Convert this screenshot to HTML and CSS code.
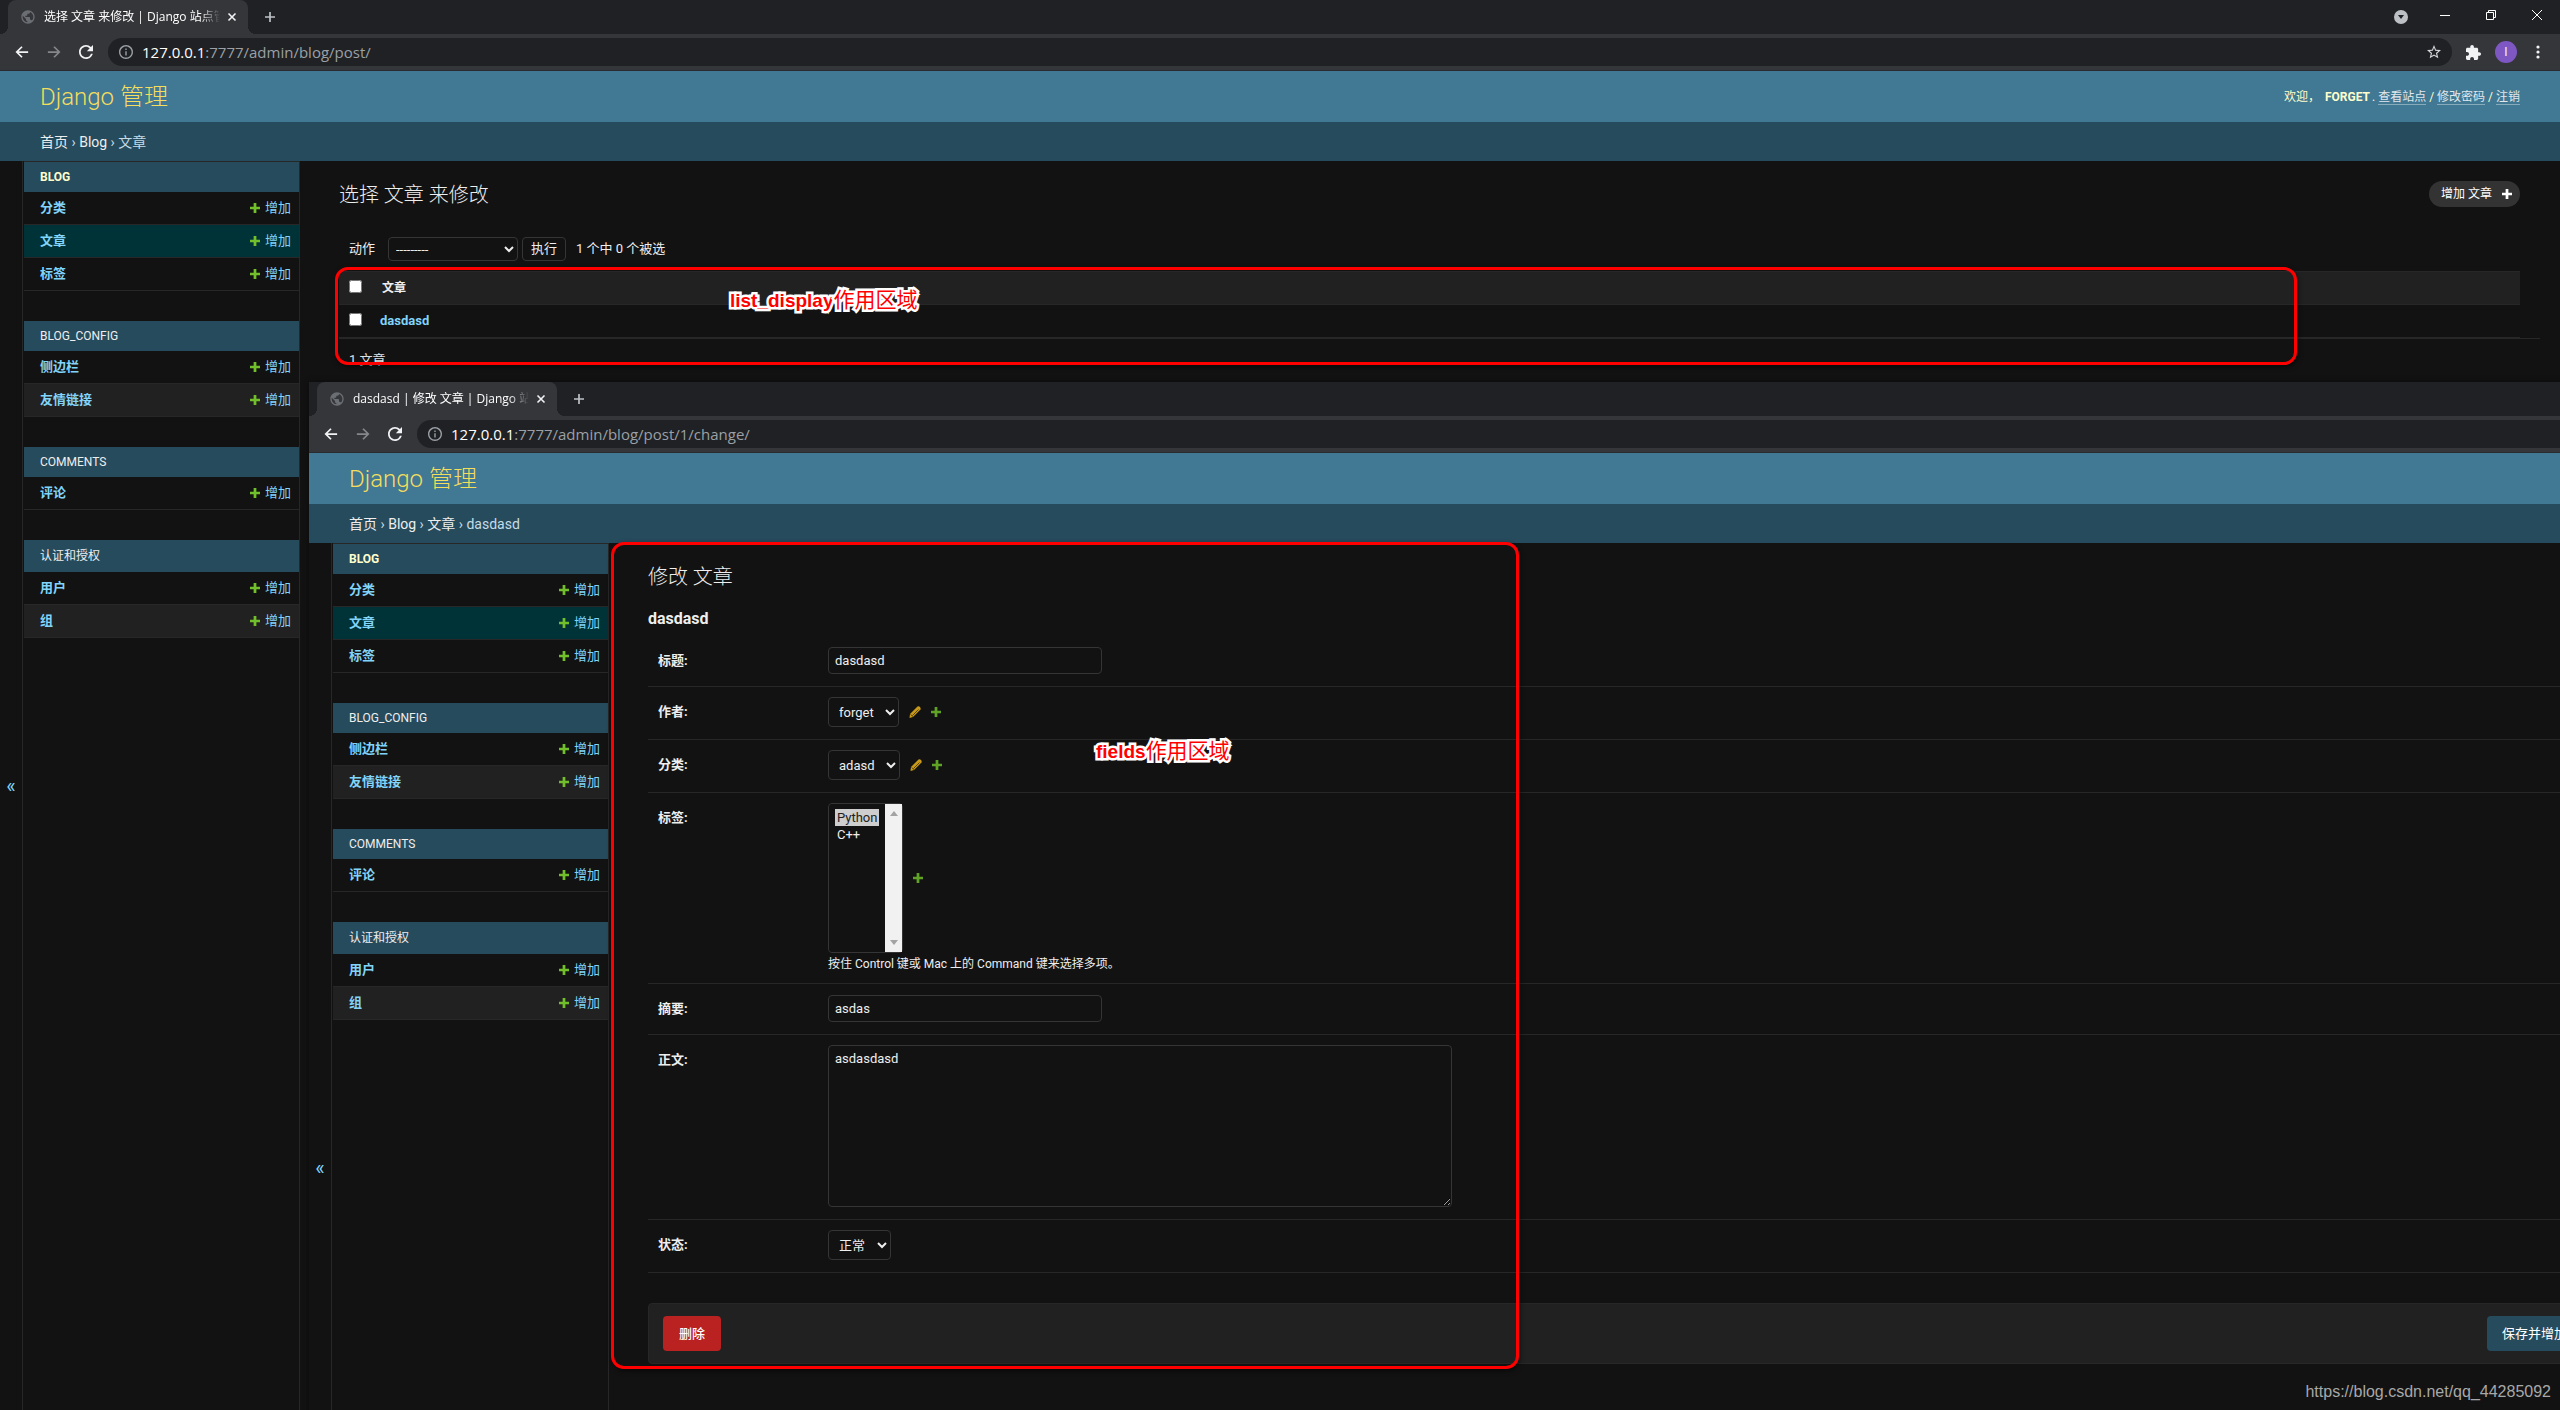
FILE: index.html
```html
<!DOCTYPE html>
<html lang="zh-CN">
<head>
<meta charset="utf-8">
<title>选择 文章 来修改 | Django 站点管理</title>
<link rel="stylesheet" href="styles.css">
</head>
<body>
<svg class="defs" width="0" height="0" aria-hidden="true">
  <symbol id="globe" viewBox="0 0 24 24"><path d="M12 2C6.48 2 2 6.48 2 12s4.48 10 10 10 10-4.480 10-10S17.520 2 12 2zm-1 17.930c-3.950-.490-7-3.850-7-7.930 0-.620.080-1.210.210-1.790L9 15v1c0 1.100.900 2 2 2v1.930zm6.900-2.540c-.260-.810-1-1.390-1.900-1.390h-1v-3c0-.550-.450-1-1-1H8v-2h2c.550 0 1-.450 1-1V7h2c1.100 0 2-.900 2-2v-.410c2.930 1.190 5 4.060 5 7.410 0 2.080-.800 3.970-2.100 5.390z"/></symbol>
  <symbol id="close" viewBox="0 0 10 10"><path d="M1.500 1.500l7 7M8.500 1.500l-7 7" fill="none" stroke="currentColor" stroke-width="1.600"/></symbol>
  <symbol id="newtab" viewBox="0 0 12 12"><path d="M6 1v10M1 6h10" fill="none" stroke="currentColor" stroke-width="1.700"/></symbol>
  <symbol id="back" viewBox="0 0 16 16"><path d="M15 8H2.500M8 2L2 8l6 6" fill="none" stroke="currentColor" stroke-width="2"/></symbol>
  <symbol id="forward" viewBox="0 0 16 16"><path d="M1 8h12.500M8 2l6 6-6 6" fill="none" stroke="currentColor" stroke-width="2"/></symbol>
  <symbol id="reload" viewBox="4 4 16 16"><path d="M17.650 6.350A7.958 7.958 0 0 0 12 4c-4.420 0-7.990 3.580-7.990 8s3.570 8 7.990 8c3.730 0 6.840-2.550 7.730-6h-2.080A5.990 5.990 0 0 1 12 18c-3.310 0-6-2.690-6-6s2.690-6 6-6c1.660 0 3.140.690 4.220 1.780L13 11h7V4l-2.350 2.350z"/></symbol>
  <symbol id="info" viewBox="2 2 20 20"><path d="M11 7h2v2h-2zm0 4h2v6h-2zm1-9C6.480 2 2 6.480 2 12s4.480 10 10 10 10-4.480 10-10S17.520 2 12 2zm0 18c-4.410 0-8-3.590-8-8s3.590-8 8-8 8 3.590 8 8-3.590 8-8 8z"/></symbol>
  <symbol id="star" viewBox="2 2 20 20"><path d="M22 9.240l-7.190-.620L12 2 9.190 8.630 2 9.240l5.460 4.730L5.820 21 12 17.270 18.180 21l-1.630-7.030L22 9.240zM12 15.400l-3.760 2.270 1-4.280-3.320-2.880 4.380-.380L12 6.100l1.710 4.040 4.380.380-3.320 2.880 1 4.280L12 15.400z"/></symbol>
  <symbol id="puzzle" viewBox="2 1 21 21"><path d="M20.500 11H19V7c0-1.100-.900-2-2-2h-4V3.500C13 2.120 11.880 1 10.500 1S8 2.120 8 3.500V5H4c-1.100 0-1.990.900-1.990 2v3.800H3.500c1.490 0 2.700 1.210 2.700 2.700s-1.210 2.700-2.700 2.700H2V20c0 1.100.900 2 2 2h3.800v-1.500c0-1.490 1.210-2.700 2.700-2.700s2.700 1.210 2.700 2.700V22H17c1.100 0 2-.900 2-2v-4h1.500c1.380 0 2.500-1.120 2.500-2.500S21.880 11 20.500 11z"/></symbol>
  <symbol id="plus" viewBox="0 0 11 11"><path d="M4 0h3v4h4v3H7v4H4V7H0V4h4z"/></symbol>
  <symbol id="pencil" viewBox="0 0 12 12"><path d="M8.500.500Q10 0 11 1t.500 2.500L4 11 .500 12 1 8z" fill="#c99a17"/><path d="M3.500 9.500l6-6M1.500 8.500l2.500 2" fill="none" stroke="#5c4608"/></symbol>
</svg>

<div class="desktop">
  <section class="window">
    <div class="tabstrip">
      <div class="tab">
        <svg class="favicon"><use href="#globe"/></svg>
        <span class="tab-title">选择 文章 来修改 | Django 站点管理</span>
        <button class="icon-btn" aria-label="关闭标签页"><svg class="i10"><use href="#close"/></svg></button>
      </div>
      <button class="icon-btn new-tab" aria-label="新标签页"><svg class="i12"><use href="#newtab"/></svg></button>
      <div class="caption-buttons">
        <svg class="tab-search" width="14" height="14" viewBox="0 0 14 14"><circle cx="7" cy="7" r="7" fill="#bdc1c6"/><path d="M4 5h6l-3 4z" fill="#202124"/></svg>
        <svg width="12" height="12" viewBox="0 0 12 12"><path d="M1 6.500h10" stroke="#fff"/></svg>
        <svg width="12" height="12" viewBox="0 0 12 12"><path d="M1.500 3.500h7v7h-7zM3.500 3.500v-2h7v7h-2" fill="none" stroke="#fff"/></svg>
        <svg width="12" height="12" viewBox="0 0 12 12"><path d="M1 1l10 10M11 1L1 11" stroke="#fff"/></svg>
      </div>
    </div>
    <div class="toolbar">
      <button class="icon-btn" aria-label="后退"><svg class="i14"><use href="#back"/></svg></button>
      <button class="icon-btn dim" aria-label="前进"><svg class="i14"><use href="#forward"/></svg></button>
      <button class="icon-btn" aria-label="重新加载"><svg class="i14"><use href="#reload"/></svg></button>
      <div class="omnibox">
        <svg class="i14"><use href="#info"/></svg>
        <span class="url"><b>127.0.0.1</b>:7777/admin/blog/post/</span>
        <svg class="i14 star"><use href="#star"/></svg>
      </div>
      <div class="toolbar-end">
        <svg class="i15"><use href="#puzzle"/></svg>
        <span class="avatar">I</span>
        <svg width="4" height="14" viewBox="0 0 4 14"><circle cx="2" cy="2" r="1.600"/><circle cx="2" cy="7" r="1.600"/><circle cx="2" cy="12" r="1.600"/></svg>
      </div>
    </div>
    <header class="site-header">
      <a class="brand" href="#">Django 管理</a>
      <div class="user-tools">欢迎， <strong>FORGET</strong>. <a href="#">查看站点</a> / <a href="#">修改密码</a> / <a href="#">注销</a></div>
    </header>
    <nav class="breadcrumbs"><a href="#">首页</a> › <a href="#">Blog</a> › 文章</nav>
    <div class="main">
      <button class="toggle" aria-label="切换导航">«</button>
      <nav class="sidebar">
        <section class="app">
          <h2 class="app-name current">BLOG</h2>
          <div class="model"><a class="model-name" href="#">分类</a><a class="add" href="#"><svg class="i10"><use href="#plus"/></svg>增加</a></div>
          <div class="model selected"><a class="model-name" href="#">文章</a><a class="add" href="#"><svg class="i10"><use href="#plus"/></svg>增加</a></div>
          <div class="model"><a class="model-name" href="#">标签</a><a class="add" href="#"><svg class="i10"><use href="#plus"/></svg>增加</a></div>
        </section>
        <section class="app">
          <h2 class="app-name">BLOG_CONFIG</h2>
          <div class="model"><a class="model-name" href="#">侧边栏</a><a class="add" href="#"><svg class="i10"><use href="#plus"/></svg>增加</a></div>
          <div class="model even"><a class="model-name" href="#">友情链接</a><a class="add" href="#"><svg class="i10"><use href="#plus"/></svg>增加</a></div>
        </section>
        <section class="app">
          <h2 class="app-name">COMMENTS</h2>
          <div class="model"><a class="model-name" href="#">评论</a><a class="add" href="#"><svg class="i10"><use href="#plus"/></svg>增加</a></div>
        </section>
        <section class="app">
          <h2 class="app-name tall">认证和授权</h2>
          <div class="model"><a class="model-name" href="#">用户</a><a class="add" href="#"><svg class="i10"><use href="#plus"/></svg>增加</a></div>
          <div class="model even"><a class="model-name" href="#">组</a><a class="add" href="#"><svg class="i10"><use href="#plus"/></svg>增加</a></div>
        </section>
      </nav>
      <main class="content">
        <div class="title-row">
          <h1>选择 文章 来修改</h1>
          <a class="add-object" href="#">增加 文章 <svg class="i10"><use href="#plus"/></svg></a>
        </div>
        <div class="actions">
          <label for="action">动作</label>
          <select id="action" class="action-select"><option>---------</option></select>
          <button class="go">执行</button>
          <span class="counter">1 个中 0 个被选</span>
        </div>
        <table class="results">
          <thead><tr><th class="check"><input type="checkbox" aria-label="全选"></th><th>文章</th></tr></thead>
          <tbody><tr><td class="check"><input type="checkbox" aria-label="选择 dasdasd"></td><td><a href="#">dasdasd</a></td></tr></tbody>
        </table>
        <p class="paginator">1 文章</p>
      </main>
    </div>
  </section>

  <section class="window front">
    <div class="tabstrip">
      <div class="tab">
        <svg class="favicon"><use href="#globe"/></svg>
        <span class="tab-title">dasdasd | 修改 文章 | Django 站点管理</span>
        <button class="icon-btn" aria-label="关闭标签页"><svg class="i10"><use href="#close"/></svg></button>
      </div>
      <button class="icon-btn new-tab" aria-label="新标签页"><svg class="i12"><use href="#newtab"/></svg></button>
    </div>
    <div class="toolbar">
      <button class="icon-btn" aria-label="后退"><svg class="i14"><use href="#back"/></svg></button>
      <button class="icon-btn dim" aria-label="前进"><svg class="i14"><use href="#forward"/></svg></button>
      <button class="icon-btn" aria-label="重新加载"><svg class="i14"><use href="#reload"/></svg></button>
      <div class="omnibox">
        <svg class="i14"><use href="#info"/></svg>
        <span class="url"><b>127.0.0.1</b>:7777/admin/blog/post/1/change/</span>
      </div>
    </div>
    <header class="site-header"><a class="brand" href="#">Django 管理</a></header>
    <nav class="breadcrumbs"><a href="#">首页</a> › <a href="#">Blog</a> › <a href="#">文章</a> › dasdasd</nav>
    <div class="main">
      <button class="toggle" aria-label="切换导航">«</button>
      <nav class="sidebar">
        <section class="app">
          <h2 class="app-name current">BLOG</h2>
          <div class="model"><a class="model-name" href="#">分类</a><a class="add" href="#"><svg class="i10"><use href="#plus"/></svg>增加</a></div>
          <div class="model selected"><a class="model-name" href="#">文章</a><a class="add" href="#"><svg class="i10"><use href="#plus"/></svg>增加</a></div>
          <div class="model"><a class="model-name" href="#">标签</a><a class="add" href="#"><svg class="i10"><use href="#plus"/></svg>增加</a></div>
        </section>
        <section class="app">
          <h2 class="app-name">BLOG_CONFIG</h2>
          <div class="model"><a class="model-name" href="#">侧边栏</a><a class="add" href="#"><svg class="i10"><use href="#plus"/></svg>增加</a></div>
          <div class="model even"><a class="model-name" href="#">友情链接</a><a class="add" href="#"><svg class="i10"><use href="#plus"/></svg>增加</a></div>
        </section>
        <section class="app">
          <h2 class="app-name">COMMENTS</h2>
          <div class="model"><a class="model-name" href="#">评论</a><a class="add" href="#"><svg class="i10"><use href="#plus"/></svg>增加</a></div>
        </section>
        <section class="app">
          <h2 class="app-name tall">认证和授权</h2>
          <div class="model"><a class="model-name" href="#">用户</a><a class="add" href="#"><svg class="i10"><use href="#plus"/></svg>增加</a></div>
          <div class="model even"><a class="model-name" href="#">组</a><a class="add" href="#"><svg class="i10"><use href="#plus"/></svg>增加</a></div>
        </section>
      </nav>
      <main class="content">
        <div class="title-row"><h1>修改 文章</h1></div>
        <h2 class="object-name">dasdasd</h2>
        <form>
          <div class="row"><label for="title">标题:</label><div class="field"><input class="text" id="title" type="text" value="dasdasd"></div></div>
          <div class="row"><label for="owner">作者:</label><div class="field"><select id="owner"><option>forget</option></select><a class="related" href="#" aria-label="修改"><svg class="i12"><use href="#pencil"/></svg></a><a class="related" href="#" aria-label="增加"><svg class="i10"><use href="#plus"/></svg></a></div></div>
          <div class="row"><label for="category">分类:</label><div class="field"><select id="category"><option>adasd</option></select><a class="related" href="#" aria-label="修改"><svg class="i12"><use href="#pencil"/></svg></a><a class="related" href="#" aria-label="增加"><svg class="i10"><use href="#plus"/></svg></a></div></div>
          <div class="row"><label for="tags">标签:</label><div>
            <div class="field">
              <div class="listbox">
                <select id="tags" multiple><option selected>Python</option><option>C++</option></select>
                <div class="scroll"><svg width="8" height="5" viewBox="0 0 8 5"><path d="M4 0l4 5H0z"/></svg><svg width="8" height="5" viewBox="0 0 8 5"><path d="M4 5l4-5H0z"/></svg></div>
              </div>
              <a class="related" href="#" aria-label="增加"><svg class="i10"><use href="#plus"/></svg></a>
            </div>
            <p class="help">按住 Control 键或 Mac 上的 Command 键来选择多项。</p>
          </div></div>
          <div class="row"><label for="desc">摘要:</label><div class="field"><input class="text" id="desc" type="text" value="asdas"></div></div>
          <div class="row"><label for="body">正文:</label><div class="field"><textarea id="body">asdasdasd</textarea></div></div>
          <div class="row"><label for="status">状态:</label><div class="field"><select id="status"><option>正常</option></select></div></div>
          <div class="submit-row">
            <button class="btn delete" type="button">删除</button>
            <button class="btn" type="button">保存并增加另一个</button>
            <button class="btn" type="button">保存并继续编辑</button>
            <button class="btn" type="button">保存</button>
          </div>
        </form>
      </main>
    </div>
  </section>

  <div class="mark mark-list"></div>
  <div class="mark mark-fields"></div>
  <div class="note note-list">list_display<span>作用区域</span></div>
  <div class="note note-fields">fields<span>作用区域</span></div>
  <div class="watermark">https://blog.csdn.net/qq_44285092</div>
</div>
</body>
</html>
```
FILE: styles.css
```css
:root {
  --bg: #121212;
  --panel: #212121;
  --hairline: #272727;
  --border: #353535;
  --text: #eee;
  --link: #81d4fa;
  --primary: #417893;
  --secondary: #264b5d;
}

* { box-sizing: border-box; }

body {
  margin: 0;
  background: var(--bg);
  color: var(--text);
  font: 13px/18px Roboto, "Noto Sans CJK SC", sans-serif;
}

a { color: inherit; text-decoration: none; }
h1, h2, p { margin: 0; }
svg { display: block; flex: none; fill: currentColor; }
button, input, select, textarea { font: inherit; color: inherit; }
.defs { position: absolute; }

.i10 { width: 10px; height: 10px; }
.i12 { width: 12px; height: 12px; }
.i14 { width: 14px; height: 14px; }
.i15 { width: 15px; height: 15px; }

.desktop { position: relative; height: 100vh; overflow: hidden; }

.window {
  display: flex;
  flex-direction: column;
  width: 100%;
  height: 100%;
  background: var(--bg);
}
.front {
  position: absolute;
  left: 309px;
  top: 382px;
  box-shadow: 0 0 6px #0006;
}

/* Browser frame */
.tabstrip {
  display: flex;
  flex: none;
  align-items: center;
  height: 34px;
  padding-left: 8px;
  background: #202124;
  color: #e8eaed;
}
.tab {
  position: relative;
  display: flex;
  align-items: center;
  width: 240px;
  height: 34px;
  padding: 0 6px 0 12px;
  border-radius: 8px 8px 0 0;
  background: #35363a;
  font: 12px/16px "Open Sans", "Noto Sans CJK SC", sans-serif;
}
.tab::before, .tab::after {
  content: "";
  position: absolute;
  bottom: 0;
  width: 8px;
  height: 8px;
}
.tab::before { left: -8px; background: radial-gradient(circle at 0 0, #0000 8px, #35363a 8px); }
.tab::after { right: -8px; background: radial-gradient(circle at 100% 0, #0000 8px, #35363a 8px); }
.favicon { width: 16px; height: 16px; color: #6b6e73; }
.tab-title {
  flex: 1;
  margin: 0 2px 0 8px;
  overflow: hidden;
  white-space: nowrap;
  color: #fff;
  mask-image: linear-gradient(to left, #0000, #000 20px);
}
.icon-btn {
  display: grid;
  place-items: center;
  width: 20px;
  height: 20px;
  padding: 0;
  border: 0;
  background: none;
  color: #f1f3f4;
}
.dim { color: #85878a; }
.new-tab { margin-left: 12px; color: #bdc1c6; }
.caption-buttons {
  display: flex;
  align-items: center;
  gap: 34px;
  margin-left: auto;
  padding: 0 17px 4px 0;
}
.tab-search { margin: 4px -3px 0 0; }
.toolbar {
  display: flex;
  flex: none;
  align-items: center;
  gap: 12px;
  height: 37px;
  padding: 0 20px 0 12px;
  border-bottom: 1px solid #2a2b2e;
  background: #35363a;
}
.omnibox {
  display: flex;
  flex: 1;
  align-items: center;
  gap: 9px;
  height: 28px;
  padding: 0 11px;
  border-radius: 14px;
  background: #202124;
  color: #9aa0a6;
  font: 15px/20px "Open Sans", sans-serif;
}
.url b { font-weight: 400; color: #fff; }
.star { margin-left: auto; color: #d5d7da; }
.toolbar-end { display: flex; align-items: center; gap: 14px; padding-left: 2px; color: #f1f3f4; }
.toolbar-end svg:last-child { margin-left: 5px; }
.avatar {
  width: 22px;
  height: 22px;
  border-radius: 50%;
  background: #7e57c2;
  font-size: 12px;
  line-height: 22px;
  text-align: center;
}

/* Admin header */
.site-header {
  display: flex;
  flex: none;
  align-items: center;
  justify-content: space-between;
  height: 51px;
  padding: 0 40px;
  background: var(--primary);
  color: #ffc;
}
.brand { font-size: 24px; font-weight: 300; line-height: 28px; color: #f5dd5d; }
.user-tools { font-size: 12px; }
.user-tools a { border-bottom: 1px solid #ffffff60; color: #e0e8ec; }
.user-tools strong { margin: 0 2px; }
.breadcrumbs {
  flex: none;
  height: 39px;
  padding: 0 40px;
  background: var(--secondary);
  color: #c4dce8;
  font-size: 14px;
  line-height: 40px;
}
.breadcrumbs a { color: #eee; }

/* Layout */
.main { display: flex; flex: 1; min-height: 0; }
.toggle {
  flex: 0 0 23px;
  margin-right: 1px;
  padding: 0;
  border: 0;
  border-right: 1px solid var(--hairline);
  background: none;
  color: var(--link);
  font-size: 20px;
}
.sidebar {
  flex: 0 0 276px;
  border: 1px solid var(--hairline);
  border-width: 1px 1px 0 0;
}
.app { margin-bottom: 30px; }
.app-name {
  padding-left: 16px;
  background: var(--secondary);
  font-size: 12px;
  font-weight: 400;
  line-height: 30px;
}
.app-name.current { color: #ffc; font-weight: 700; }
.app-name.tall { line-height: 32px; }
.model {
  display: flex;
  justify-content: space-between;
  padding: 0 8px 0 16px;
  border-bottom: 1px solid var(--hairline);
  color: var(--link);
  line-height: 32px;
}
.model.selected { background: #003338; }
.model.even { background: var(--panel); }
.model-name { font-weight: 700; }
.add { display: flex; align-items: center; gap: 5px; }
.add svg { color: #70bf2b; }

.content { flex: 1; min-width: 0; padding: 20px 40px 20px 39px; }
.title-row { display: flex; justify-content: space-between; height: 46px; }
h1 { font-size: 20px; font-weight: 300; line-height: 28px; }
.add-object {
  display: flex;
  align-items: center;
  gap: 10px;
  height: 26px;
  padding: 0 8px 0 12px;
  border-radius: 13px;
  background: #333;
  color: #fff;
  font-size: 12px;
}

/* Change list */
.actions {
  display: flex;
  align-items: center;
  padding: 10px;
}
select, .go, .text, textarea, .listbox {
  border: 1px solid var(--border);
  border-radius: 4px;
  background: var(--bg);
}
select { height: 30px; padding: 0 8px 0 6px; }
.action-select { width: 130px; height: 24px; margin: 0 4px 0 13px; padding: 0 3px; }
.go { height: 24px; padding: 0 8px; line-height: 20px; }
.counter { margin-left: 10px; }
input[type="checkbox"] { display: block; width: 13px; height: 13px; margin: 0; }

.results { width: 100%; border-collapse: collapse; text-align: left; }
.results th, .results td { height: 33px; padding: 0 8px; border-bottom: 1px solid var(--hairline); vertical-align: middle; }
.results th { padding-left: 10px; background: var(--panel); border-top: 1px solid var(--hairline); font-size: 12px; }
.results .check { width: 33px; padding: 0 0 4px 10px; }
.results a { color: var(--link); font-weight: 700; }
.paginator {
  margin-right: -20px;
  padding: 12px 10px;
  border-top: 1px solid var(--hairline);
  color: #e0e0e0;
}

/* Change form */
.object-name { height: 27px; font-size: 16px; line-height: 20px; }
.row {
  display: flex;
  padding: 10px 10px 12px;
  border-bottom: 1px solid var(--hairline);
}
.row > label { flex: 0 0 170px; height: 28px; font-weight: 700; line-height: 30px; }
.row .field { display: flex; align-items: center; min-height: 28px; }
.text { width: 274px; height: 27px; padding: 0 6px; }
textarea { display: block; width: 624px; height: 162px; padding: 4px 6px; resize: both; }
.related { margin-left: 10px; color: #5fa225; }
.listbox { display: flex; height: 150px; }
.listbox select {
  width: 56px;
  height: 148px;
  padding: 5px 6px;
  border: 0;
  overflow: hidden;
}
.listbox option { height: 17px; min-height: 0; padding: 1px 2px; line-height: 15px; }
.listbox option:checked { background: #cecece linear-gradient(#cecece, #cecece); color: #222; }
.scroll {
  display: flex;
  flex-direction: column;
  align-items: center;
  justify-content: space-between;
  width: 17px;
  padding: 7px 0;
  background: #f1f1f1;
  color: #a3a3a3;
}
.help { padding-top: 5px; font-size: 12px; line-height: 13px; }
.submit-row {
  display: flex;
  gap: 8px;
  margin-top: 30px;
  padding: 12px 14px;
  border: 1px solid var(--hairline);
  border-radius: 4px;
  background: var(--panel);
}
.btn {
  height: 35px;
  padding: 0 15px;
  border: 0;
  border-radius: 4px;
  background: var(--secondary);
  color: #fff;
  white-space: nowrap;
}
.delete { margin-right: auto; padding: 0 16px; background: #ba2121; font-weight: 500; }

/* Annotations drawn over the windows */
.mark {
  position: absolute;
  border: 3px solid #f00;
  border-radius: 13px;
  box-shadow: 1px 2px 5px #0008;
}
.mark-list { left: 335px; top: 267px; width: 1962px; height: 98px; }
.mark-fields { left: 611px; top: 542px; width: 908px; height: 827px; }
.note {
  position: absolute;
  color: #f00;
  font: 700 19px/24px "Liberation Sans", "Noto Sans CJK SC", sans-serif;
  white-space: nowrap;
  -webkit-text-stroke: 5px #fff;
  paint-order: stroke fill;
}
.note span { font-size: 21px; font-weight: 400; }
.note-list { left: 730px; top: 288px; }
.note-fields { left: 1096px; top: 739px; }
.watermark {
  position: absolute;
  right: 9px;
  bottom: 8px;
  color: #a8a8a8;
  font: 16px/20px "Liberation Sans", sans-serif;
}
```
